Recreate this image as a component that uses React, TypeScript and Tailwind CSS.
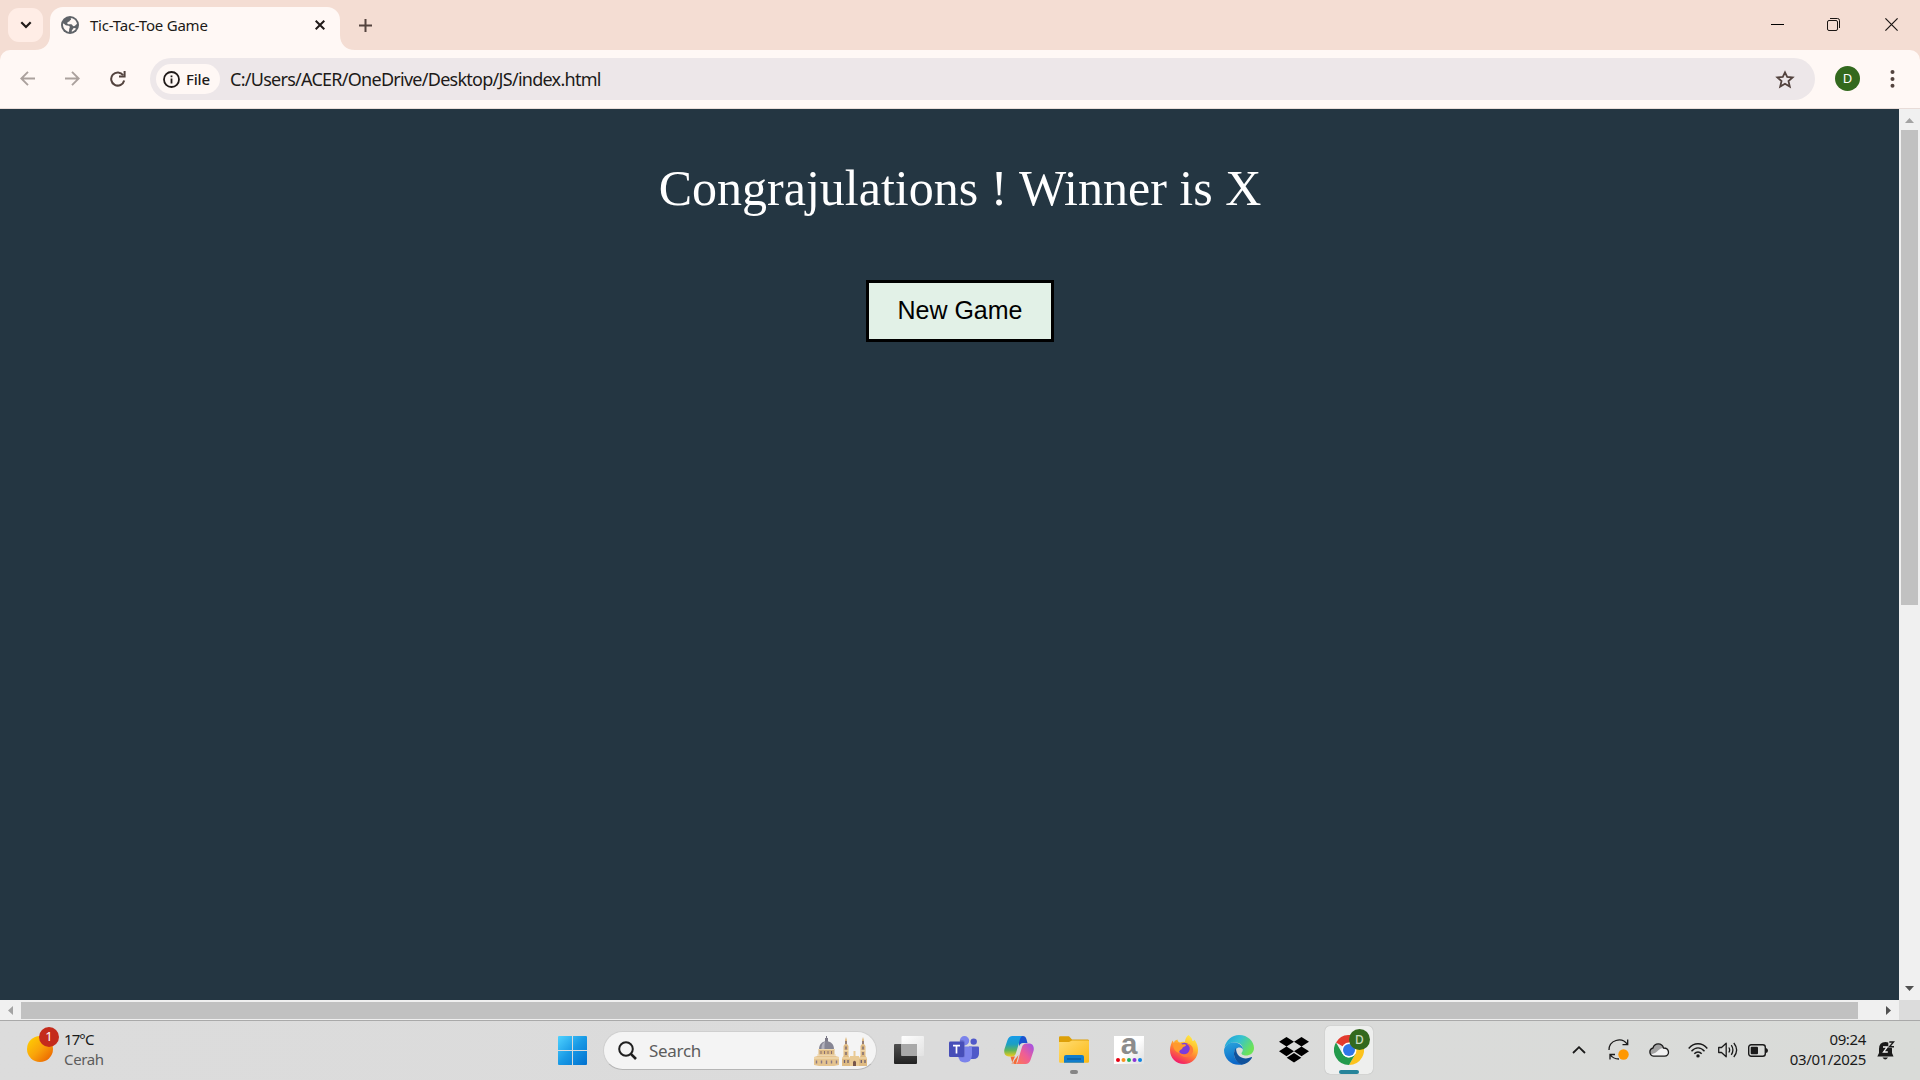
import React from "react";

function Globe() {
  return (
    <svg width="18" height="18" viewBox="0 0 18 18">
      <circle cx="9" cy="9" r="9" fill="#5f6368" />
      <path d="M2 7.600 C3.500 7.600 4 9.500 6 9.600 C8.500 9.600 9.300 10.600 8.600 12 C7.800 13 8.500 14.500 7.800 15.900 C4.400 15.300 1.600 12 2 7.600Z" fill="#fff8f5" />
      <path d="M9.500 2 C13 2.200 15.600 4.800 16 8 C14.500 8.500 14.500 10 13 10.200 C11.500 10.300 11.800 8.600 10.300 8.200 H7.200 C5.800 8 6 6 7.500 5.800 C9 5.600 8.300 4.300 9.500 4 C10.500 3.700 10 2.800 9.500 2Z" fill="#fff8f5" />
      <path d="M10.800 15.700 C10.300 14 11.800 13.800 12 12.700 C12.500 11.500 14 12 15 12.600 C14 14.400 12.600 15.300 10.800 15.700Z" fill="#fff8f5" />
    </svg>
  );
}

function TabStrip() {
  return (
    <div className="flex h-[50px] items-start bg-[#f4ddd3]">
      <div className="ml-2 mt-2 flex h-[34px] w-[35px] items-center justify-center rounded-[11px] bg-[#ffede6]">
        <svg width="12" height="8" viewBox="0 0 12 8" fill="none" stroke="#201a18" strokeWidth="2.2">
          <path d="M1.3 1.3 L6 6 L10.7 1.3" />
        </svg>
      </div>
      <svg className="mt-[35px] -ml-[8px]" width="15" height="15" viewBox="0 0 15 15">
        <path d="M15 0 V15 H0 C9 15 15 9 15 0Z" fill="#fff8f5" />
      </svg>
      <div className="mt-[7px] flex h-[43px] w-[290px] items-center rounded-t-[13px] bg-[#fff8f5] pb-[7px] pl-[11px]">
        <Globe />
        <span className="ml-[11px] w-[225px] pt-px whitespace-nowrap text-[15px] tracking-[-0.220px] text-[#201a18]">Tic-Tac-Toe Game</span>
        <svg className="shrink-0" width="10" height="10" viewBox="0 0 10 10" stroke="#201a18" strokeWidth="2">
          <path d="M.7 .7 L9.3 9.3 M9.3 .7 L.7 9.3" />
        </svg>
      </div>
      <svg className="mt-[35px]" width="15" height="15" viewBox="0 0 15 15">
        <path d="M0 0 V15 H15 C6 15 0 9 0 0Z" fill="#fff8f5" />
      </svg>
      <svg className="ml-[4px] mt-[19px]" width="13" height="13" viewBox="0 0 13 13" stroke="#53433e" strokeWidth="2">
        <path d="M6.5 0 V13 M0 6.5 H13" />
      </svg>
      <div className="grow" />
      <svg className="mt-[24px]" width="13" height="1" viewBox="0 0 13 1">
        <rect width="13" height="1" fill="#000" />
      </svg>
      <svg className="ml-[43px] mt-[18px]" width="13" height="13" viewBox="0 0 13 13" fill="none" stroke="#1a1513">
        <rect x=".5" y="2.5" width="10" height="10" rx="1.5" />
        <path d="M3 .5 H10.5 Q12.5 .5 12.5 2.5 V10" />
      </svg>
      <svg className="ml-[45px] mr-[22px] mt-[18px]" width="13" height="13" viewBox="0 0 13 13" stroke="#1a1513" strokeWidth="1.2">
        <path d="M.4 .4 L12.6 12.6 M12.6 .4 L.4 12.6" />
      </svg>
    </div>
  );
}

function Toolbar() {
  return (
    <div className="h-[59px] bg-[#f4ddd3]">
      <div className="flex h-[59px] items-start rounded-t-[10px] border-b border-[#e8dcd8] bg-[#fff8f5]">
        <svg className="ml-[20px] mt-[21px]" width="15" height="15" viewBox="0 0 15 15" fill="none" stroke="#aba19d" strokeWidth="1.9">
          <path d="M15 7.5 H1.5 M8 .8 L1.3 7.5 L8 14.2" />
        </svg>
        <svg className="ml-[30px] mt-[21px]" width="15" height="15" viewBox="0 0 15 15" fill="none" stroke="#aba19d" strokeWidth="1.9">
          <path d="M0 7.5 H13.5 M7 .8 L13.7 7.5 L7 14.2" />
        </svg>
        <svg className="ml-[30px] mt-[21px]" width="16" height="16" viewBox="0 0 16 16" fill="none" stroke="#53433e" strokeWidth="2">
          <path d="M13.2 4.2 A6.6 6.6 0 1 0 14.2 9.6" />
          <path d="M14.6 0 V5.6 H9" />
        </svg>
        <div className="ml-[24px] mt-[8px] flex h-[42px] w-[1665px] items-center rounded-full bg-[#ede7e9] pl-[6px]">
          <div className="flex h-[30px] w-[64px] items-center rounded-full bg-[#fff8f5] pl-[7px]">
            <svg width="17" height="17" viewBox="0 0 17 17" fill="none" stroke="#201a18" strokeWidth="1.8">
              <circle cx="8.5" cy="8.5" r="7.5" />
              <path d="M8.5 7.6 V12.6 M8.5 4.4 V6.2" />
            </svg>
            <span className="ml-[6px] text-[15px] font-medium tracking-[-0.2px] text-[#201a18]">File</span>
          </div>
          <span className="ml-[10px] whitespace-nowrap text-[18px] tracking-[-0.730px] text-[#201a18]">C:/Users/ACER/OneDrive/Desktop/JS/index.html</span>
          <div className="grow" />
          <svg className="mr-[20px]" width="20" height="19" viewBox="0 0 20 19" fill="none" stroke="#53433e" strokeWidth="1.8">
            <path d="M10 2.4 L12.2 7 L17.6 7.5 L13.5 11.1 L14.8 16.6 L10 13.7 L5.2 16.6 L6.5 11.1 L2.4 7.5 L7.8 7Z" />
          </svg>
        </div>
        <div className="ml-[20px] mt-[16px] flex size-[25px] items-center justify-center rounded-full bg-[#33691e] text-[13px] text-white">D</div>
        <svg className="ml-[30px] mt-[20px]" width="5" height="18" viewBox="0 0 5 18" fill="#53433e">
          <circle cx="2.5" cy="2" r="2" />
          <circle cx="2.5" cy="9" r="2" />
          <circle cx="2.5" cy="15.8" r="2" />
        </svg>
      </div>
    </div>
  );
}

function Page() {
  return (
    <div className="flex h-[891px]">
      <main className="flex w-[1899px] flex-col items-center bg-[#243642] pl-[21px]">
        <h1 className="mt-[51px] whitespace-nowrap font-['Liberation_Serif',serif] text-[50px] leading-[57px] text-white">Congrajulations ! Winner is X</h1>
        <button className="mt-[63px] h-[62px] w-[188px] border-[3px] border-black bg-[#e2f1e7] font-['Liberation_Sans',sans-serif] text-[25px] text-black">New Game</button>
      </main>
      <div className="flex w-[21px] flex-col items-center bg-[#f0f0f0]">
        <svg className="mt-[9px]" width="9" height="5" viewBox="0 0 9 5"><path d="M4.5 0 L9 5 H0Z" fill="#a3a3a3" /></svg>
        <div className="mt-[7px] h-[475px] w-[17px] bg-[#c1c1c1]" />
        <div className="grow" />
        <svg className="mb-[9px]" width="9" height="5" viewBox="0 0 9 5"><path d="M4.5 5 L9 0 H0Z" fill="#505050" /></svg>
      </div>
    </div>
  );
}

function BottomScroll() {
  return (
    <div className="flex h-[20px] items-center bg-[#f0f0f0]">
      <svg className="ml-[8px]" width="5" height="9" viewBox="0 0 5 9"><path d="M0 4.5 L5 0 V9Z" fill="#a3a3a3" /></svg>
      <div className="ml-[8px] mt-px h-[17px] w-[1837px] bg-[#c1c1c1]" />
      <svg className="ml-[28px]" width="5" height="9" viewBox="0 0 5 9"><path d="M5 4.5 L0 0 V9Z" fill="#505050" /></svg>
      <div className="ml-auto h-[20px] w-[21px] bg-[#dcdcdc]" />
    </div>
  );
}

function StartLogo() {
  return (
    <svg width="29" height="29" viewBox="0 0 29 29">
      <defs>
        <linearGradient id="win" x1="0" y1="0" x2="29" y2="29" gradientUnits="userSpaceOnUse">
          <stop offset="0" stopColor="#4fd2ff" /><stop offset=".5" stopColor="#1899e5" /><stop offset="1" stopColor="#0070cf" />
        </linearGradient>
      </defs>
      <path d="M1 0 H14 V14 H0 V1Q0 0 1 0Z M15 0 H28 Q29 0 29 1 V14 H15Z M0 15 H14 V29 H1 Q0 29 0 28Z M15 15 H29 V28 Q29 29 28 29 H15Z" fill="url(#win)" />
    </svg>
  );
}

function Landmarks() {
  return (
    <svg width="53" height="30" viewBox="0 0 53 30">
      <path d="M12.5 0 V5" stroke="#777583" />
      <rect x="11" y="2" width="3" height="4" fill="#7d7a88" />
      <path d="M5 13 C5 2.5 20 2.5 20 13Z" fill="#868593" />
      <path d="M11 5.5 C8 7 7.5 10 7.5 13 H10.5 C10.5 10 10.5 8 11 5.5Z" fill="#b3b2bd" />
      <rect x="4.5" y="13" width="16" height="6" fill="#dcb983" />
      <path d="M4 13.5 H21 M3 19 H22" stroke="#f1d9ae" />
      <path d="M7 15 V18 M10.5 15 V18 M14 15 V18 M17.5 15 V18" stroke="#8a7070" />
      <path d="M0 21 L5 19.5 H20 L25 21 V29 L20 30 H5 L0 29Z" fill="#e5c48f" />
      <path d="M0 22 H25" stroke="#f6e3bd" />
      <path d="M2.5 24.500 V27.500 M7.500 24.500 V27.500 M12.500 24.500 V28 M17.500 24.500 V27.500 M22.500 24.500 V27.500" stroke="#8a7884" strokeWidth="1.4" />
      <path d="M28 30 V22 L29.500 20 V10 L31 8 V1 L32 4 L33 1 V8 L34.500 10 V20 L36 22 V30Z M45 30 V22 L46.500 20 V10 L48 8 V1 L49 4 L50 1 V8 L51.500 10 V20 L53 22 V30Z" fill="#dfbb83" />
      <path d="M36 30 V20 H39.500 V15 H41.500 V20 H45 V30Z" fill="#e9ca94" />
      <path d="M32 10.500 V13.500 M32 16 V19 M30.500 24 V27 M34 24 V27 M49 10.500 V13.500 M49 16 V19 M47.300 24 V27 M51 24 V27 M32 5 V8 M49 5 V8" stroke="#70606f" strokeWidth="1.300" />
      <path d="M39 30 V26 Q40.500 23.500 42 26 V30Z" fill="#77564c" />
      <path d="M28 22 H36 M45 22 H53 M29.500 14.800 H34.500 M46.500 14.800 H51.500" stroke="#f7e2b8" />
    </svg>
  );
}

function TaskView() {
  return (
    <svg width="30" height="28" viewBox="0 0 30 28">
      <defs>
        <linearGradient id="tv1" x1="0" y1="0" x2="0" y2="1"><stop stopColor="#505050" /><stop offset="1" stopColor="#222" /></linearGradient>
        <linearGradient id="tv2" x1="0" y1="0" x2="1" y2="1"><stop stopColor="#fff" /><stop offset="1" stopColor="#e2e2e2" /></linearGradient>
      </defs>
      <rect y="8" width="23" height="20" rx="1" fill="url(#tv1)" />
      <rect x="7.500" width="22.500" height="20" rx="1" fill="url(#tv2)" />
      <rect x="7.500" y="8" width="15.500" height="12" fill="#a9a9a9" />
    </svg>
  );
}

function Teams() {
  return (
    <svg width="30" height="27" viewBox="0 0 30 27">
      <circle cx="24.700" cy="5.600" r="3.200" fill="#5059c9" />
      <path d="M20 10.500 H29 Q30 10.500 30 11.500 V18 Q29.500 23 24.500 23 H20Z" fill="#5059c9" />
      <circle cx="15.500" cy="4.700" r="4.700" fill="#7b83eb" />
      <path d="M9 10.500 H22 Q23 10.500 23 11.500 V19 Q22.500 26.500 16 26.500 Q9.500 26.500 9 19Z" fill="#7b83eb" />
      <path d="M11 4 H14 Q16 5 16 7 V19 Q16 21.500 13.500 21.500 H10Z" fill="#5c62b9" opacity=".55" />
      <rect y="5.500" width="15" height="15.500" rx="1.200" fill="#474eb8" />
      <path d="M4 9.700 H11 M7.500 9.700 V17.500" stroke="#fff" strokeWidth="1.700" />
    </svg>
  );
}

function Copilot() {
  return (
    <svg width="30" height="28" viewBox="0 0 30 28">
      <defs>
        <linearGradient id="cp1" x1="0" y1="0" x2="0" y2="1"><stop stopColor="#159bea" /><stop offset=".4" stopColor="#1c9fc4" /><stop offset=".7" stopColor="#5fb55a" /><stop offset="1" stopColor="#f3cb1d" /></linearGradient>
        <linearGradient id="cp2" x1="1" y1="0" x2="0" y2="1"><stop stopColor="#9a50ec" /><stop offset=".5" stopColor="#ee5d97" /><stop offset="1" stopColor="#ff7a4c" /></linearGradient>
      </defs>
      <path d="M15 0 H19 Q21.500 0 22.400 3 L23.500 7 H19 Q16 7 15 10.500Z" fill="#1a53d0" />
      <path d="M7.500 28 Q9.500 27.500 10.500 24 L14.500 19 L12 28 H11 Q8.500 28 7.500 24 L6.500 20.500 H11 Z" fill="#f26b35" />
      <path d="M8.500 0 H19 C16.500 0 16 3 15 7 L12 17 Q11 20.500 7.500 20.500 H5 C1 20.500 -.5 17 .5 13 L3.500 4 Q5 0 8.500 0Z" fill="url(#cp1)" />
      <path d="M21.500 28 H11 C13.500 28 14 25 15 21 L18 11 Q19 7.500 22.500 7.500 H25 C29 7.500 30.500 11 29.500 15 L26.500 24 Q25 28 21.500 28Z" fill="url(#cp2)" />
    </svg>
  );
}

function Explorer() {
  return (
    <svg width="30" height="27" viewBox="0 0 30 27">
      <defs>
        <linearGradient id="fe" x1="0" y1="0" x2="1" y2="1"><stop stopColor="#ffdc72" /><stop offset="1" stopColor="#fbb914" /></linearGradient>
      </defs>
      <path d="M0 7 V1.500 Q0 .3 1.200 .3 H10 L13 3.500 H29 Q30 3.500 30 5 V10Z" fill="#dda008" />
      <path d="M0 6 H10 L13 4.500 H29 Q30 4.500 30 5.500 V25.500 Q30 26.700 28.800 26.700 H1.200 Q0 26.700 0 25.500Z" fill="url(#fe)" />
      <path d="M5 26.700 V21 Q5 19 7 19 H23 Q25 19 25 21 V26.700Z" fill="#117dcc" />
      <path d="M8 23 H22" stroke="#075796" strokeWidth="1.200" />
    </svg>
  );
}

function AmazonTile() {
  return (
    <div className="flex h-[28px] w-[30px] flex-col items-center bg-gradient-to-br from-white via-white to-[#dedede]">
      <span className="h-[22px] font-['Liberation_Sans',sans-serif] text-[30px] font-bold leading-[16px] text-[#8c8c8c]">a</span>
      <svg width="28" height="4" viewBox="0 0 28 4">
        <circle cx="3" cy="2" r="2" fill="#e60012" /><circle cx="8.500" cy="2" r="2" fill="#f7931e" />
        <circle cx="14" cy="2" r="2" fill="#1fb35b" /><circle cx="19.500" cy="2" r="2" fill="#8a35d6" /><circle cx="25" cy="2" r="2" fill="#0c84e4" />
      </svg>
    </div>
  );
}

function Firefox() {
  return (
    <svg width="28" height="29" viewBox="0 0 28 29">
      <defs>
        <linearGradient id="ff" x1=".8" y1="0" x2=".3" y2="1"><stop stopColor="#fff04a" /><stop offset=".35" stopColor="#ffbd2d" /><stop offset=".65" stopColor="#ff7139" /><stop offset="1" stopColor="#f0146f" /></linearGradient>
      </defs>
      <path d="M18.500 0 C21 2 22 3.500 22.500 6 C24 6 24.500 5 24.500 4.500 C27 8 28 11.500 28 15 C28 23 22 29 14 29 C6 29 0 23 0 15 C0 11 1.500 8 2.500 5.500 L4 8 C4.500 5 6 5.500 7.500 4.500 C7.500 6 8.500 7 10 7.500 C12 6.500 14 6.500 15 7 C15 4 16.500 1.500 18.500 0Z" fill="url(#ff)" />
      <circle cx="14.500" cy="14" r="6.300" fill="#7b3bdc" />
      <path d="M3 9 C6 7.500 10 8 12.500 9.500 C15 9 16 9.500 16 10.500 C14 12 12.500 12 12 14 C10 15 8.500 16 9.500 18 C5 17 3 13 3 9Z" fill="#ff9a2e" />
      <path d="M9 17 C12 20.500 18.500 20 19.500 15 C20.500 12 18 9.500 16 9 C20 8 24 12 23 17 C20 24 11 23.500 9 17Z" fill="#ff7a38" />
    </svg>
  );
}

function Edge() {
  return (
    <svg width="30" height="30" viewBox="0 0 30 30">
      <defs>
        <linearGradient id="eg1" x1="0" y1="0" x2="1" y2=".5"><stop stopColor="#1c9bdc" /><stop offset=".5" stopColor="#35c1d2" /><stop offset="1" stopColor="#6de357" /></linearGradient>
        <linearGradient id="eg2" x1="0" y1="0" x2=".3" y2="1"><stop stopColor="#2aa7dd" /><stop offset="1" stopColor="#0b66c8" /></linearGradient>
      </defs>
      <path d="M.5 12.500 C2 5 8 0 15 0 C24 0 30 6.500 30 13 C30 18 26 20.500 22 20.500 C19 20.500 17 19 17.500 18 C21 14 18 7 10 7.500 C6 7.500 2.500 9.500 .5 12.500Z" fill="url(#eg1)" />
      <path d="M0 15 C1 9.500 6 7 10.500 7.500 C15.500 8 19 11 19 14.500 C16 10.500 10 13 10 19 C10 24.500 15 28.500 20 29 C9 32.500 0 24.500 0 15Z" fill="url(#eg2)" />
      <path d="M12 13 C8 18 10 26 17.500 29.500 C22 29.500 26 26.500 28 22.800 C28 22 27.500 22 27 22.300 C21 25 12 23 12 13Z" fill="#10529c" />
    </svg>
  );
}

function Dropbox() {
  return (
    <svg width="30" height="26" viewBox="0 0 30 26">
      <path d="M7.500 0 L15 4.800 L7.500 9.500 L0 4.800Z M22.500 0 L30 4.800 L22.500 9.500 L15 4.800Z M7.500 9.500 L15 14.300 L7.500 19.200 L0 14.300Z M22.500 9.500 L30 14.300 L22.500 19.200 L15 14.300Z M15 16 L22.300 20.700 L15 25.500 L7.700 20.700Z" fill="#000" />
    </svg>
  );
}

function Chrome() {
  return (
    <svg width="30" height="30" viewBox="0 0 30 30">
      <path d="M15 15 L2 7.500 A15 15 0 0 1 28 7.500 H15Z" fill="#e33b2e" />
      <path d="M15 7.500 H28 A15 15 0 0 1 15 30 L21.500 18.750Z" fill="#fcc31e" />
      <path d="M2 7.500 L8.500 18.750 Q11 22.500 15 22.500 L21.500 18.750 L15 30 A15 15 0 0 1 2 7.500Z" fill="#229a4b" />
      <circle cx="15" cy="15" r="7.500" fill="#fff" />
      <circle cx="15" cy="15" r="6" fill="#2f76e8" />
    </svg>
  );
}

function Tile({ children, bar }: { children: React.ReactNode; bar?: string }) {
  return (
    <div className="relative flex h-[48px] w-[48px] shrink-0 items-center justify-center pb-px">
      {children}
      {bar && <div className={bar} />}
    </div>
  );
}

function Tray() {
  return (
    <div className="flex h-[38px] items-center text-[#1a1a1a]">
      <svg width="14" height="8" viewBox="0 0 14 8" fill="none" stroke="#1a1a1a" strokeWidth="1.800"><path d="M1 7 L7 1.200 L13 7" /></svg>
      <svg className="ml-[22px]" width="22" height="22" viewBox="0 0 22 22" fill="none" stroke="#1a1a1a" strokeWidth="1.300">
        <path d="M1 11 C1 1.500 13.500 -3 19.500 5.500 M19.700 .5 V5.700 H14.500 M2 20.500 V15.500 H7 M2 15.500 C4 18.500 7 20 11 20" />
        <circle cx="15.500" cy="15.500" r="5.200" fill="#ff9800" stroke="none" />
      </svg>
      <svg className="ml-[18px]" width="22" height="14" viewBox="0 0 22 14">
        <path d="M5.500 13.200 A4.200 4.200 0 0 1 5 5 C6.500 -.5 14 -.5 15.500 5 C22 5 22 13.200 16.500 13.200Z" fill="#f2f2f2" />
        <path d="M5 5 C6.500 -.5 14 -.5 15.500 5 C12 5 10 8 7 10 L2.500 11.500 C0 9 2 5 5 5Z" fill="#a2a2a2" />
        <path d="M5.500 13.200 A4.200 4.200 0 0 1 5 5 C6.500 -.5 14 -.5 15.500 5 C22 5 22 13.200 16.500 13.200Z" fill="none" stroke="#1a1a1a" strokeWidth="1.300" />
      </svg>
      <svg className="ml-[18px]" width="20" height="15" viewBox="0 0 20 15" fill="none" stroke="#1a1a1a" strokeWidth="1.400">
        <path d="M.7 5.500 C6 -.8 14 -.8 19.300 5.500 M3.500 8.200 C7.500 3.700 12.500 3.700 16.500 8.200 M6.300 10.800 C8.500 8.300 11.500 8.300 13.700 10.800" />
        <circle cx="10" cy="12.900" r="1.700" fill="#1a1a1a" stroke="none" />
      </svg>
      <svg className="ml-[10px]" width="20" height="16" viewBox="0 0 20 16" fill="none" stroke="#1a1a1a" strokeWidth="1.300" strokeLinejoin="round">
        <path d="M.7 5.500 H3.500 L8.200 1.200 V14.800 L3.500 10.500 H.7Z M10.800 5.500 Q12.500 8 10.800 10.500 M13.300 3.200 Q16.500 8 13.300 12.800 M15.800 1 Q21.500 8 15.800 15" />
      </svg>
      <svg className="ml-[10px]" width="20" height="13" viewBox="0 0 20 13">
        <rect x=".7" y=".7" width="16.600" height="11.600" rx="2.500" fill="none" stroke="#1a1a1a" strokeWidth="1.400" />
        <rect x="2.700" y="2.700" width="7.300" height="7.600" rx="1" fill="#1a1a1a" />
        <path d="M18 4 Q20 4.500 20 6.500 Q20 8.500 18 9Z" fill="#1a1a1a" />
      </svg>
      <div className="mb-[2px] ml-[16px] flex w-[82px] flex-col items-end text-[15px] leading-[20px] tracking-[-0.350px]">
        <span>09:24</span>
        <span>03/01/2025</span>
      </div>
      <svg className="ml-[11px] mt-px" width="18" height="19" viewBox="0 0 18 19">
        <path d="M2 8 Q2 1 8.500 1 Q15 1 15 8 V12 L16.500 15.500 H.3 L2 12Z M5.500 16.500 H11 Q8.300 20.500 5.500 16.500Z" fill="#1a1a1a" />
        <path d="M11.300 0 H18 V6.800 H11.300Z" fill="#dadbd9" />
        <path d="M6 6 H10.300 L6.500 11 H10.800" fill="none" stroke="#f2f2f2" strokeWidth="1.300" />
        <path d="M12.300 1 H16.500 L12.500 5.800 H17" fill="none" stroke="#1a1a1a" strokeWidth="1.400" />
      </svg>
    </div>
  );
}

function Taskbar() {
  return (
    <footer className="flex h-[60px] items-start border-t border-[#a9a9a9] bg-gradient-to-r from-[#dcdcdc] via-[#dbdbdb] to-[#d9dbd8]">
      <div className="flex h-[59px] w-[558px] pl-[27px]">
        <div className="relative h-[59px] w-[37px]">
          <div className="mt-[15px] size-[26px] rounded-full bg-gradient-to-br from-[#ffd400] via-[#f9a30a] to-[#e65400]" />
          <div className="absolute left-[12px] top-[6px] flex size-[20px] items-center justify-center rounded-full bg-[#c42b1c] text-[13px] text-white">1</div>
        </div>
        <div className="mt-[8px] flex flex-col text-[15px] leading-[20px]">
          <span className="tracking-[-0.900px] text-[#1a1a1a]">17°C</span>
          <span className="tracking-[-0.350px] text-[#5c5c5c]">Cerah</span>
        </div>
      </div>
      <div className="mt-[15px]"><StartLogo /></div>
      <div className="ml-[16px] mt-[10px] flex h-[39px] w-[274px] items-center rounded-full border border-[#cfcfcf] border-b-[#b5b5b5] bg-[#f4f4f4] pl-[14px]">
        <svg width="19" height="19" viewBox="0 0 19 19" fill="none" stroke="#1f1f1f" strokeWidth="2"><circle cx="8" cy="8" r="6.800" /><path d="M12.600 12.600 L18 18" strokeWidth="2.600" /></svg>
        <span className="ml-[12px] w-[165px] text-[17px] tracking-[-0.300px] text-[#5c5c5c]">Search</span>
        <Landmarks />
      </div>
      <div className="ml-[8px] mt-[5px] flex gap-[7px]">
        <Tile><TaskView /></Tile>
        <Tile><Teams /></Tile>
        <Tile><Copilot /></Tile>
        <Tile bar="absolute bottom-0 left-[20px] h-[4px] w-[8px] rounded-full bg-[#858585]"><Explorer /></Tile>
        <Tile><AmazonTile /></Tile>
        <Tile><Firefox /></Tile>
        <Tile><Edge /></Tile>
        <Tile><Dropbox /></Tile>
        <div className="rounded-[5px] bg-[#eeefee] shadow-[0_0_1px_#999]">
          <Tile bar="absolute bottom-0 left-[14px] h-[4px] w-[20px] rounded-full bg-[#26849a]">
            <Chrome />
            <div className="absolute left-[24px] top-[3px] flex size-[21px] items-center justify-center rounded-full bg-[#33691e] text-[12px] font-medium text-[#c9dcc0]">D</div>
          </Tile>
        </div>
      </div>
      <div className="ml-auto mr-[25px] mt-[10px]"><Tray /></div>
    </footer>
  );
}

export default function App() {
  return (
    <div className="h-[1080px] w-[1920px] overflow-hidden font-['Noto_Sans',sans-serif]">
      <TabStrip />
      <Toolbar />
      <Page />
      <BottomScroll />
      <Taskbar />
    </div>
  );
}
